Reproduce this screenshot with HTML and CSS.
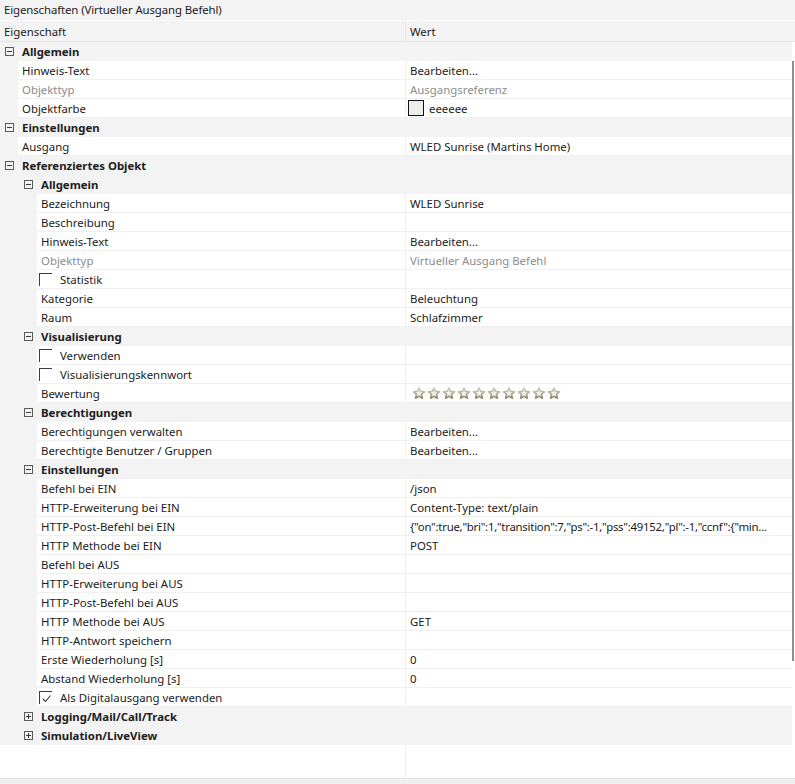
FILE: index.html
```html
<!DOCTYPE html>
<html lang="de">
<head>
<meta charset="utf-8">
<title>Eigenschaften</title>
<link rel="stylesheet" href="styles.css">
</head>
<body>
<div class="panel">
  <div class="title">Eigenschaften (Virtueller Ausgang Befehl)</div>
  <div class="colhead">
    <div class="ch">Eigenschaft</div>
    <div class="ch chv">Wert</div>
  </div>
  <div class="grid">
    <div class="list">
      <div class="grp g1"><span class="tog minus"></span><span class="gl">Allgemein</span></div>
      <div class="item l1"><div class="gut"></div><div class="name">Hinweis-Text</div><div class="val">Bearbeiten...</div></div>
      <div class="item l1"><div class="gut"></div><div class="name dis">Objekttyp</div><div class="val dis">Ausgangsreferenz</div></div>
      <div class="item l1"><div class="gut"></div><div class="name">Objektfarbe</div><div class="val"><span class="swatch"></span><span>eeeeee</span></div></div>

      <div class="grp g1"><span class="tog minus"></span><span class="gl">Einstellungen</span></div>
      <div class="item l1"><div class="gut"></div><div class="name">Ausgang</div><div class="val">WLED Sunrise (Martins Home)</div></div>

      <div class="grp g1"><span class="tog minus"></span><span class="gl">Referenziertes Objekt</span></div>
      <div class="grp g2"><span class="tog minus"></span><span class="gl">Allgemein</span></div>
      <div class="item l2"><div class="gut"></div><div class="name">Bezeichnung</div><div class="val">WLED Sunrise</div></div>
      <div class="item l2"><div class="gut"></div><div class="name">Beschreibung</div><div class="val"></div></div>
      <div class="item l2"><div class="gut"></div><div class="name">Hinweis-Text</div><div class="val">Bearbeiten...</div></div>
      <div class="item l2"><div class="gut"></div><div class="name dis">Objekttyp</div><div class="val dis">Virtueller Ausgang Befehl</div></div>
      <div class="item l2"><div class="gut"></div><div class="name cbn"><span class="cb"></span>Statistik</div><div class="val"></div></div>
      <div class="item l2"><div class="gut"></div><div class="name">Kategorie</div><div class="val">Beleuchtung</div></div>
      <div class="item l2"><div class="gut"></div><div class="name">Raum</div><div class="val">Schlafzimmer</div></div>

      <div class="grp g2"><span class="tog minus"></span><span class="gl">Visualisierung</span></div>
      <div class="item l2"><div class="gut"></div><div class="name cbn"><span class="cb"></span>Verwenden</div><div class="val"></div></div>
      <div class="item l2"><div class="gut"></div><div class="name cbn"><span class="cb"></span>Visualisierungskennwort</div><div class="val"></div></div>
      <div class="item l2"><div class="gut"></div><div class="name">Bewertung</div><div class="val stars">
        <svg width="150" height="13" viewBox="0 0 150 13">
          <defs>
            <linearGradient id="sg" x1="0" y1="0" x2="0" y2="1">
              <stop offset="0" stop-color="#d8d2c0"/>
              <stop offset="1" stop-color="#8f8770"/>
            </linearGradient>
            <polygon id="st" points="6,0.8 7.6,4.4 11.5,4.7 8.5,7.3 9.4,11.2 6,9.2 2.6,11.2 3.5,7.3 0.5,4.7 4.4,4.4" fill="#f4f2ec" stroke="url(#sg)" stroke-width="1.6" stroke-linejoin="round"/>
          </defs>
          <use href="#st" x="0"/><use href="#st" x="15"/><use href="#st" x="30"/><use href="#st" x="45"/><use href="#st" x="60"/>
          <use href="#st" x="75"/><use href="#st" x="90"/><use href="#st" x="105"/><use href="#st" x="120"/><use href="#st" x="135"/>
        </svg>
      </div></div>

      <div class="grp g2"><span class="tog minus"></span><span class="gl">Berechtigungen</span></div>
      <div class="item l2"><div class="gut"></div><div class="name">Berechtigungen verwalten</div><div class="val">Bearbeiten...</div></div>
      <div class="item l2"><div class="gut"></div><div class="name">Berechtigte Benutzer / Gruppen</div><div class="val">Bearbeiten...</div></div>

      <div class="grp g2"><span class="tog minus"></span><span class="gl">Einstellungen</span></div>
      <div class="item l2"><div class="gut"></div><div class="name">Befehl bei EIN</div><div class="val">/json</div></div>
      <div class="item l2"><div class="gut"></div><div class="name">HTTP-Erweiterung bei EIN</div><div class="val">Content-Type: text/plain</div></div>
      <div class="item l2"><div class="gut"></div><div class="name">HTTP-Post-Befehl bei EIN</div><div class="val"><span class="json">{"on":true,"bri":1,"transition":7,"ps":-1,"pss":49152,"pl":-1,"ccnf":{"min...</span></div></div>
      <div class="item l2"><div class="gut"></div><div class="name">HTTP Methode bei EIN</div><div class="val">POST</div></div>
      <div class="item l2"><div class="gut"></div><div class="name">Befehl bei AUS</div><div class="val"></div></div>
      <div class="item l2"><div class="gut"></div><div class="name">HTTP-Erweiterung bei AUS</div><div class="val"></div></div>
      <div class="item l2"><div class="gut"></div><div class="name">HTTP-Post-Befehl bei AUS</div><div class="val"></div></div>
      <div class="item l2"><div class="gut"></div><div class="name">HTTP Methode bei AUS</div><div class="val">GET</div></div>
      <div class="item l2"><div class="gut"></div><div class="name">HTTP-Antwort speichern</div><div class="val"></div></div>
      <div class="item l2"><div class="gut"></div><div class="name">Erste Wiederholung [s]</div><div class="val">0</div></div>
      <div class="item l2"><div class="gut"></div><div class="name">Abstand Wiederholung [s]</div><div class="val">0</div></div>
      <div class="item l2"><div class="gut"></div><div class="name cbn"><span class="cb on"><svg width="11" height="11" viewBox="0 0 11 11"><polyline points="2,6 4.5,8.5 9.5,2.5" fill="none" stroke="#333" stroke-width="1.1"/></svg></span>Als Digitalausgang verwenden</div><div class="val"></div></div>

      <div class="grp g2"><span class="tog plus"></span><span class="gl">Logging/Mail/Call/Track</span></div>
      <div class="grp g2"><span class="tog plus"></span><span class="gl">Simulation/LiveView</span></div>

      <div class="filler"><div class="fname"></div><div class="fval"></div></div>
    </div>
    <div class="vscroll"><div class="thumb"></div></div>
  </div>
  <div class="foot"></div>
</div>
</body>
</html>
```
FILE: styles.css
```css
html, body {
  margin: 0;
  padding: 0;
}
body {
  font-family: "Segoe UI", "Noto Sans", "Open Sans", sans-serif;
  font-size: 11.4px;
  color: #1b1b1b;
  background: #ffffff;
}
.panel {
  width: 795px;
  height: 784px;
  display: flex;
  flex-direction: column;
  background: #ffffff;
  overflow: hidden;
}
.title {
  height: 20px;
  line-height: 20px;
  padding-left: 4px;
  background: #f3f3f3;
  border-bottom: 1px solid #fbfbfb;
  white-space: nowrap;
  letter-spacing: -0.1px;
}
.colhead {
  display: grid;
  grid-template-columns: 405px 1fr;
  height: 21px;
  background: #f3f3f3;
  border-bottom: 1px solid #e4e4e4;
  box-sizing: border-box;
}
.ch {
  line-height: 21px;
  padding-left: 4px;
}
.chv {
  border-left: 1px solid #e4e4e4;
  padding-left: 4px;
}
.grid {
  flex: 1;
  display: grid;
  grid-template-columns: 792px 3px;
  min-height: 0;
}
.list {
  display: flex;
  flex-direction: column;
}
.grp {
  height: 19px;
  background: #f3f3f3;
  display: flex;
  align-items: center;
  white-space: nowrap;
}
.g1 { padding-left: 5px; }
.g2 { padding-left: 24px; }
.gl {
  font-weight: bold;
  color: #202020;
  margin-left: 8px;
}
.tog {
  width: 9px;
  height: 9px;
  box-sizing: border-box;
  border: 1px solid #5a5a5a;
  position: relative;
  flex: none;
}
.tog::before {
  content: "";
  position: absolute;
  left: 1px;
  right: 1px;
  top: 3px;
  height: 1px;
  background: #3a3a3a;
}
.tog.plus::after {
  content: "";
  position: absolute;
  top: 1px;
  bottom: 1px;
  left: 3px;
  width: 1px;
  background: #3a3a3a;
}
.item {
  display: grid;
  height: 19px;
  white-space: nowrap;
}
.l1 { grid-template-columns: 18px 387px 1fr; }
.l2 { grid-template-columns: 37px 368px 1fr; }
.gut {
  background: #f3f3f3;
}
.name, .val {
  background: #ffffff;
  border-bottom: 1px solid #f0f0f0;
  box-sizing: border-box;
  line-height: 19px;
  overflow: hidden;
}
.name {
  padding-left: 4px;
}
.val {
  border-left: 1px solid #f0f0f0;
  padding-left: 4px;
  display: flex;
  align-items: center;
}
.json {
  letter-spacing: -0.25px;
}
.dis {
  color: #8c8c8c;
}
.cbn {
  display: flex;
  align-items: center;
  padding-left: 2px;
}
.cb {
  width: 13px;
  height: 13px;
  box-sizing: border-box;
  border-top: 1px solid #3c3c3c;
  border-left: 1px solid #3c3c3c;
  margin-right: 8px;
  flex: none;
  position: relative;
  top: 0;
}
.cb.on svg {
  display: block;
  margin: 1px 0 0 1px;
}
.swatch {
  width: 16px;
  height: 16px;
  box-sizing: border-box;
  border: 1px solid #111111;
  background: #eeeeee;
  margin-left: -2px;
  margin-right: 5px;
  flex: none;
}
.stars svg {
  display: block;
  margin-left: 3px;
}
.filler {
  flex: 1;
  display: grid;
  grid-template-columns: 405px 1fr;
}
.fval {
  border-left: 1px solid #f0f0f0;
}
.vscroll {
  background: #ffffff;
  padding-top: 19px;
}
.thumb {
  width: 2px;
  height: 600px;
  background: #8e8e8e;
}
.foot {
  height: 5px;
  background: #f0f0f0;
  border-top: 1px solid #e2e2e2;
}
```
